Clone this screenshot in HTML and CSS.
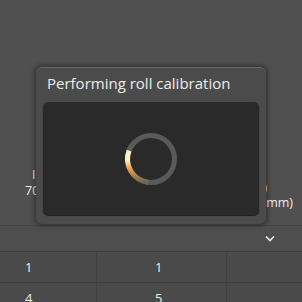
FILE: index.html
```html
<!DOCTYPE html>
<html lang="en">
  <head>
    <meta charset="UTF-8">
    <title>Roll calibration</title>
    <link rel="stylesheet" href="styles.css">
  </head>
  <body>
    <div class="page">
      <div class="top">
        <div class="labels">
          <div class="lbl left">
            <p class="tick">I</p>
            <p>70</p>
          </div>
          <div class="lbl right">
            <p class="paren">)</p>
            <p>(mm)</p>
          </div>
        </div>
      </div>
      <div class="table">
        <div class="head">
          <svg class="chev" width="10" height="7" viewBox="0 0 10 7"><path d="M1 1.5 L5 5.5 L9 1.5" fill="none" stroke="#e8e8e8" stroke-width="1.6"/></svg>
        </div>
        <div class="row">
          <div class="cell">1</div>
          <div class="cell mid">1</div>
          <div class="cell"></div>
        </div>
        <div class="row">
          <div class="cell">4</div>
          <div class="cell mid">5</div>
          <div class="cell"></div>
        </div>
      </div>
    </div>

    <div class="dialog">
      <h1 class="title">Performing roll calibration</h1>
      <div class="panel">
        <svg class="spinner" width="60" height="60" viewBox="0 0 60 60">
          <defs>
            <linearGradient id="arc" x1="0" y1="0" x2="0" y2="1">
              <stop offset="0.3" stop-color="#fff0cc"/>
              <stop offset="0.55" stop-color="#f0a444"/>
              <stop offset="1" stop-color="#6e6455"/>
            </linearGradient>
          </defs>
          <circle cx="30" cy="30" r="23.5" fill="none" stroke="#5a5a5a" stroke-width="5"/>
          <path d="M8.1 21.6 A23.5 23.5 0 0 0 27.1 53.3" fill="none" stroke="url(#arc)" stroke-width="5"/>
        </svg>
      </div>
    </div>
  </body>
</html>
```

FILE: styles.css
```css
*{
    margin: 0;
    padding: 0;
    box-sizing: border-box;
}

body{
    background: #505050;
    font-family: 'Open Sans', 'Noto Sans', sans-serif;
    color: #eeeeee;
    width: 302px;
    height: 302px;
    overflow: hidden;
}

.page{
    display: flex;
    flex-direction: column;
    height: 302px;
}

.top{
    height: 226px;
    flex-shrink: 0;
    border-bottom: 1px solid #454545;
    display: flex;
    align-items: flex-end;
}

.labels{
    width: 100%;
    display: flex;
    justify-content: space-between;
    align-items: flex-end;
}

.lbl{
    font-size: 12.5px;
    line-height: 16px;
}

.lbl.left{
    padding-left: 25px;
    margin-bottom: 26px;
}

.tick{
    padding-left: 7px;
}

.lbl.right{
    padding-right: 9px;
    line-height: 15px;
    margin-bottom: 15px;
}

.paren{
    padding-left: 1px;
}

.table{
    flex: 1;
}

.head{
    height: 26px;
    background: #4e4e4e;
    display: flex;
    align-items: center;
    justify-content: flex-end;
    padding-right: 27px;
    border-bottom: 1px solid #3e3e3e;
}

.row{
    display: grid;
    grid-template-columns: 97px 130px 1fr;
    height: 31px;
    background: #4a4a4a;
    border-bottom: 1px solid #3e3e3e;
}

.cell{
    border-right: 1px solid #404040;
    padding-left: 25px;
    font-size: 13px;
    line-height: 30px;
}

.cell.mid{
    padding-left: 58px;
}

.cell:last-child{
    border-right: 0;
}

.dialog{
    position: absolute;
    left: 36px;
    top: 67px;
    width: 230px;
    height: 157px;
    background: #4b4b4b;
    border-radius: 6px;
    border-top: 1px solid #6a6a6a;
    box-shadow: 0 0 4px 2px rgba(0, 0, 0, 0.35);
    padding: 4px 7px 9px 7px;
    display: flex;
    flex-direction: column;
}

.title{
    font-size: 15px;
    font-weight: 400;
    color: #ececec;
    padding-left: 4px;
    line-height: 22px;
    margin-bottom: 8px;
}

.panel{
    flex: 1;
    background: #2a2a2a;
    border-radius: 5px;
    display: flex;
    align-items: center;
    justify-content: center;
    box-shadow: 0 1px 1px rgba(0, 0, 0, 0.6);
}
```
